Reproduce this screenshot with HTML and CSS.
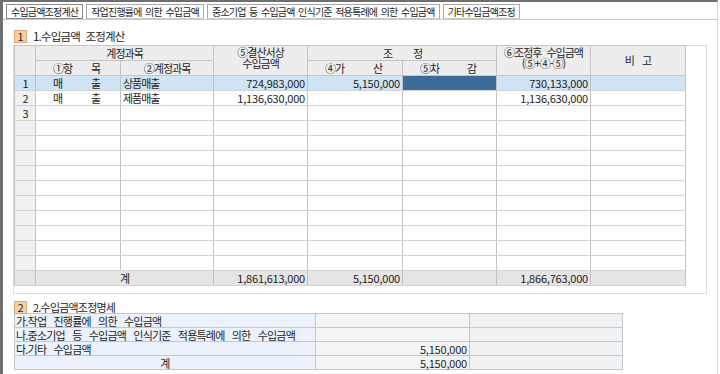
FILE: index.html
```html
<!DOCTYPE html>
<html lang="ko">
<head>
    <meta charset="UTF-8">
    <title>수입금액조정계산</title>
    <link rel="stylesheet" href="styles.css">
</head>
<body>
    <div class="frame">
        <div class="tabs">
            <span class="tab active">수입금액조정계산</span>
            <span class="tab">작업진행률에 의한 수입금액</span>
            <span class="tab">중소기업 등 수입금액 인식기준 적용특례에 의한 수입금액</span>
            <span class="tab">기타수입금액조정</span>
        </div>

        <div class="sec-title">
            <span class="badge">1</span>
            <span>1.수입금액 조정계산</span>
        </div>

        <div class="panel">
            <table class="grid">
                <colgroup>
                    <col style="width:21px"><col style="width:85px"><col style="width:93px"><col style="width:94px">
                    <col style="width:95px"><col style="width:94px"><col style="width:94px"><col style="width:95px">
                </colgroup>
                <thead>
                    <tr>
                        <th rowspan="2"></th>
                        <th colspan="2">계정과목</th>
                        <th rowspan="2" class="two">⑤결산서상<br>수입금액</th>
                        <th colspan="2"><span class="pair wide"><span>조</span><span>정</span></span></th>
                        <th rowspan="2" class="two">⑥조정후 수입금액<br>(⑤+④-⑤)</th>
                        <th rowspan="2" class="gap">비 고</th>
                    </tr>
                    <tr>
                        <th><span class="pair"><span>①항</span><span>목</span></span></th>
                        <th>②계정과목</th>
                        <th><span class="pair"><span>④가</span><span>산</span></span></th>
                        <th><span class="pair"><span>⑤차</span><span>감</span></span></th>
                    </tr>
                </thead>
                <tbody>
                    <tr class="sel">
                        <td class="rn">1</td>
                        <td><span class="pair"><span>매</span><span>출</span></span></td>
                        <td>상품매출</td>
                        <td class="num">724,983,000</td>
                        <td class="num">5,150,000</td>
                        <td class="cur"></td>
                        <td class="num">730,133,000</td>
                        <td></td>
                    </tr>
                    <tr>
                        <td class="rn">2</td>
                        <td><span class="pair"><span>매</span><span>출</span></span></td>
                        <td>제품매출</td>
                        <td class="num">1,136,630,000</td>
                        <td></td>
                        <td></td>
                        <td class="num">1,136,630,000</td>
                        <td></td>
                    </tr>
                    <tr><td class="rn">3</td><td></td><td></td><td></td><td></td><td></td><td></td><td></td></tr>
                    <tr><td class="rn"></td><td></td><td></td><td></td><td></td><td></td><td></td><td></td></tr>
                    <tr><td class="rn"></td><td></td><td></td><td></td><td></td><td></td><td></td><td></td></tr>
                    <tr><td class="rn"></td><td></td><td></td><td></td><td></td><td></td><td></td><td></td></tr>
                    <tr><td class="rn"></td><td></td><td></td><td></td><td></td><td></td><td></td><td></td></tr>
                    <tr><td class="rn"></td><td></td><td></td><td></td><td></td><td></td><td></td><td></td></tr>
                    <tr><td class="rn"></td><td></td><td></td><td></td><td></td><td></td><td></td><td></td></tr>
                    <tr><td class="rn"></td><td></td><td></td><td></td><td></td><td></td><td></td><td></td></tr>
                    <tr><td class="rn"></td><td></td><td></td><td></td><td></td><td></td><td></td><td></td></tr>
                    <tr><td class="rn"></td><td></td><td></td><td></td><td></td><td></td><td></td><td></td></tr>
                    <tr><td class="rn"></td><td></td><td></td><td></td><td></td><td></td><td></td><td></td></tr>
                    <tr class="total">
                        <td></td>
                        <td colspan="2" class="center">계</td>
                        <td class="num">1,861,613,000</td>
                        <td class="num">5,150,000</td>
                        <td></td>
                        <td class="num">1,866,763,000</td>
                        <td></td>
                    </tr>
                </tbody>
            </table>
        </div>

        <div class="sec-title second">
            <span class="badge">2</span>
            <span>2.수입금액조정명세</span>
        </div>

        <table class="detail">
            <colgroup>
                <col style="width:301px"><col style="width:154px"><col style="width:153px">
            </colgroup>
            <tr><td class="label">가.작업 진행률에 의한 수입금액</td><td class="val"></td><td class="rest"></td></tr>
            <tr><td class="label">나.중소기업 등 수입금액 인식기준 적용특례에 의한 수입금액</td><td class="val"></td><td class="rest"></td></tr>
            <tr><td class="label">다.기타 수입금액</td><td class="val">5,150,000</td><td class="rest"></td></tr>
            <tr><td class="label center">계</td><td class="val">5,150,000</td><td class="rest"></td></tr>
        </table>
    </div>
</body>
</html>
```

FILE: styles.css
```css
body {
    margin: 0;
    font-family: "Noto Sans CJK KR", "Noto Sans", sans-serif;
    font-size: 11px;
    color: #1e1e1e;
    background: #fff;
}

.frame {
    box-sizing: border-box;
    width: 718px;
    height: 374px;
    border-top: 2px solid #6f6f6f;
    border-left: 3px solid #6f6f6f;
    border-right: 1px solid #dadada;
    overflow: hidden;
}

.tabs {
    display: flex;
    gap: 3px;
    margin-top: 2px;
    padding-left: 3px;
    border-bottom: 1px solid #c9c9c9;
    height: 15px;
}

.tab {
    box-sizing: border-box;
    height: 15px;
    line-height: 13px;
    padding: 0 4px;
    border: 1px solid #a8a8a8;
    border-bottom-color: #c9c9c9;
    background: #fff;
    font-size: 10px;
    letter-spacing: -0.8px;
    word-spacing: 1.5px;
    white-space: nowrap;
}

.tab.active {
    border-color: #8a8a8a;
}

.sec-title {
    display: flex;
    align-items: center;
    gap: 6px;
    margin-top: 9px;
    padding-left: 11px;
    height: 14px;
    font-size: 11.5px;
    letter-spacing: -0.8px;
    word-spacing: 3px;
}

.sec-title.second {
    margin-top: 7px;
    height: 12px;
    line-height: 12px;
    font-size: 11px;
}

.badge {
    box-sizing: border-box;
    width: 13px;
    height: 13px;
    line-height: 11px;
    text-align: center;
    background: #f9cfa6;
    border: 1px solid #dca77a;
    font-size: 11px;
    letter-spacing: 0;
}

.panel {
    box-sizing: border-box;
    width: 694px;
    height: 249px;
    margin-top: 2px;
    margin-left: 10px;
    border: 1px solid #dcdcdc;
}

table {
    border-collapse: collapse;
    table-layout: fixed;
}

.grid {
    width: 671px;
    margin-top: -1px;
}

.grid th,
.grid td {
    border: 1px solid #c6c6c6;
    padding: 0 2px;
    height: 14px;
    line-height: 13px;
    white-space: nowrap;
    overflow: hidden;
    letter-spacing: -1px;
    word-spacing: 3px;
}

.grid td {
    border-color: #d2d2d2 #c2c2c2;
}

.grid th {
    background: #ededed;
    font-weight: normal;
    text-align: center;
    overflow: visible;
}

.grid th.two {
    line-height: 11px;
    vertical-align: top;
    padding-top: 1px;
}

.grid th.gap {
    word-spacing: 6px;
}

.pair {
    display: flex;
    justify-content: space-between;
    padding: 0 18px 0 15px;
}

.pair.wide {
    padding: 0 72px 0 73px;
}

.grid td.rn {
    background: #f1f1f1;
    text-align: center;
}

.grid .num,
.detail .val {
    text-align: right;
    letter-spacing: -0.2px;
}

.center {
    text-align: center;
}

.grid tr.sel td {
    background: #cfe4f5;
}

.grid tr.sel td.cur {
    background: #3e6c9a;
}

.grid tr.total td {
    background: #e5e5e5;
}

.detail {
    width: 608px;
    margin-left: 11px;
}

.detail td {
    border: 1px solid #c4c8cd;
    height: 13px;
    line-height: 12px;
    padding: 0 1px;
    white-space: nowrap;
    letter-spacing: -0.8px;
    word-spacing: 5px;
}

.detail td.label {
    background: #ebf2fb;
}

.detail td.val {
    background: #f3f4f6;
    padding-right: 2px;
}

.detail td.rest {
    background: #f0f1f2;
}
```
